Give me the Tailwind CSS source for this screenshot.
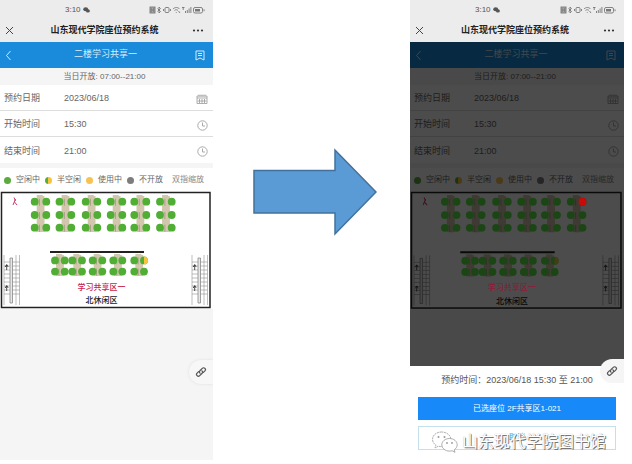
<!DOCTYPE html>
<html lang="zh-CN">
<head>
  <meta charset="UTF-8">
  <meta name="viewport" content="width=device-width, initial-scale=1.0">
  <title>座位预约系统</title>
  <script src="https://cdn.jsdelivr.net/npm/@tailwindcss/browser@4"></script>
</head>
<body class="bg-white font-['Liberation_Sans','Noto_Sans_CJK_SC',sans-serif]">
  <main class="grid min-h-screen grid-cols-[213fr_197fr_214fr] pr-2 pb-1">
    <section class="phone relative flex flex-col overflow-hidden bg-[#f5f5f5]">
      <button class="absolute right-0 bottom-[76px] z-20 flex h-6 w-6 items-center justify-center rounded-l-full bg-[#f7f7f7] shadow-[0_0_3px_#ddd]" aria-label="链接">
        <svg class="h-3 w-3" viewBox="0 0 12 12" fill="none" stroke="#555" stroke-width="1.2" stroke-linecap="round"><path d="M5 7.2a1.9 1.9 0 0 1 .1-2.7l2.2-2.2a1.8 1.8 0 0 1 2.6 2.6L8.4 6.4M7 4.800a1.9 1.9 0 0 1-.1 2.7L4.7 9.7a1.8 1.8 0 0 1-2.6-2.6l1.5-1.5"/></svg>
      </button>
    </section>

    <div class="flex items-start justify-center pt-[148px] pl-1">
      <svg class="h-[88px] w-[126px]" viewBox="0 0 126 88"><path d="M3 22.500H84V2L125 44L84 86V65H3Z" fill="#5b9bd5" stroke="#41719c" stroke-width="1.500"/></svg>
    </div>

    <section class="phone relative flex flex-col overflow-hidden bg-[#f5f5f5]" data-selected>
      <div class="absolute inset-x-0 top-[42px] bottom-0 z-10 bg-black/70"></div>
      <div class="absolute inset-x-0 bottom-0 z-20 flex flex-col gap-[6px] bg-white px-2 pt-2 pb-[10px]">
        <p class="flex h-[14px] items-center justify-center text-[9px] whitespace-pre text-[#555]">预约时间：2023/06/18 15:30 至 21:00</p>
        <button class="mt-[3px] h-[23px] bg-[#1789f8] text-[8px] text-white">已选座位 2F共享区1-021</button>
        <button class="h-6 border border-[#c5e0ea] bg-white text-[8px] text-[#2f9fd8]">取消</button>
      </div>
      <div class="absolute right-[18px] bottom-[6px] z-20 flex items-center gap-[3px]">
        <svg class="h-6 w-7" viewBox="0 0 28 24" fill="#fff" stroke="#999" stroke-width=".8">
          <path stroke-dasharray="2 .7" d="M10.500 2C5.500 2 1.500 5.200 1.500 9.300c0 2.400 1.300 4.400 3.400 5.800L4 18l3.300-1.800c1.100.3 2.100.4 3.200.4 5 0 9.300-3.100 9.300-7.300S15.500 2 10.500 2Z"/>
          <path d="M18.500 8.500c-4.300 0-7.700 2.800-7.700 6.300s3.400 6.300 7.700 6.300c.9 0 1.800-.1 2.600-.4l2.900 1.600-.8-2.500c1.800-1.200 3-3 3-5 0-3.500-3.400-6.300-7.700-6.300Z"/>
          <g fill="#999" stroke="none"><circle cx="7.500" cy="7" r="1"/><circle cx="13.500" cy="7" r="1"/><circle cx="16" cy="13" r=".9"/><circle cx="21" cy="13" r=".9"/></g>
        </svg>
        <span class="text-[16px] leading-6 whitespace-nowrap text-white [text-shadow:1px_1px_0_#777,0_0_1px_#aaa]">山东现代学院图书馆</span>
      </div>
      <button class="absolute right-0 bottom-[77px] z-20 flex h-6 w-6 items-center justify-center rounded-l-full bg-[#f5f5f5]" aria-label="链接">
        <svg class="h-3 w-3" viewBox="0 0 12 12" fill="none" stroke="#555" stroke-width="1.2" stroke-linecap="round"><path d="M5 7.2a1.9 1.9 0 0 1 .1-2.7l2.2-2.2a1.8 1.8 0 0 1 2.6 2.6L8.4 6.4M7 4.800a1.9 1.9 0 0 1-.1 2.7L4.7 9.7a1.8 1.8 0 0 1-2.6-2.6l1.5-1.5"/></svg>
      </button>
    </section>
  </main>

  <template id="screen">
    <div class="flex h-[19px] items-center bg-[#ececec] text-[#555]">
      <div class="flex flex-1 items-center gap-[2px] pl-[65px] text-[8px]">
        <span>3:10</span>
        <svg class="h-[6px] w-[7px]" viewBox="0 0 7 6" fill="#555"><ellipse cx="2.700" cy="2.300" rx="2.500" ry="2"/><ellipse cx="4.900" cy="3.900" rx="2" ry="1.700"/></svg>
      </div>
      <svg class="mr-2 h-[8px] w-[56px]" viewBox="0 0 56 8" fill="none" stroke="#777" stroke-width=".9">
        <rect x="1" y="1" width="5" height="6" fill="#aaa"/><path d="M2.200 6V2.500l2.500 3V2"/>
        <path d="M8.500 2.500l3 3L10 7V1l1.500 1.500-3 3"/>
        <rect x="16" y="1.500" width="4" height="5" rx="1"/><path d="M14.500 3v2M21.500 3v2"/>
        <path d="M24 3c2-2 5-2 6.500 0M25.500 4.500c1-1 2.600-1 3.500 0M27.300 6v.8M29.500 5l1.500 2"/>
        <path d="M33 1.500h2.500M34.200 1v3"/>
        <path d="M36.500 7v-2M38.300 7V4M40.100 7V2.500M41.900 7V1"/>
        <rect x="44.500" y="1.500" width="9" height="5.500" rx="1.500"/><rect x="46" y="3" width="5" height="2.500" fill="#777" stroke="none"/><path d="M55 3.300v2"/>
      </svg>
    </div>
    <header class="flex h-[23px] items-center justify-between bg-[#ececec] pr-[9px] pl-[5px]">
      <button class="h-[9px] w-[9px]" aria-label="关闭">
        <svg class="h-full w-full" viewBox="0 0 9 9" stroke="#444"><path d="M1 1l7 7M8 1L1 8"/></svg>
      </button>
      <h1 class="pl-[3px] text-[9px] font-semibold whitespace-nowrap text-[#222]">山东现代学院座位预约系统</h1>
      <button class="h-[9px] w-3" aria-label="更多">
        <svg class="h-full w-full" viewBox="0 0 12 9" fill="#333"><circle cx="2" cy="4.500" r="1.100"/><circle cx="6" cy="4.500" r="1.100"/><circle cx="10" cy="4.500" r="1.100"/></svg>
      </button>
    </header>
    <nav class="flex h-[26px] items-center justify-between bg-[#1a8adb] pr-2 pl-1">
      <button class="h-[11px] w-[9px]" aria-label="返回">
        <svg class="h-full w-full" viewBox="0 0 9 11" fill="none" stroke="#d5eafa"><path d="M6.500 1L2.500 5.500l4 4.500"/></svg>
      </button>
      <h2 class="pl-[3px] text-[9px] text-[#d9ecfa]">二楼学习共享一</h2>
      <button class="h-[11px] w-[10px]" aria-label="我的预约">
        <svg class="h-full w-full" viewBox="0 0 10 11" fill="none" stroke="#d5eafa"><path d="M1 1h8v9L5 8l-4 2ZM3 3.500h4M3 5.500h4"/></svg>
      </button>
    </nav>
    <p class="flex h-[17px] items-center justify-center pr-1 text-[8px] whitespace-nowrap text-[#666]">当日开放: 07:00--21:00</p>
    <div class="bg-white text-[9px] text-[#666]">
      <label class="flex h-[26px] items-center border-b border-[#ddd] pt-[3px] pr-[5px] pl-1">
        <span class="w-[60px] shrink-0">预约日期</span>
        <input class="w-0 min-w-0 flex-1" value="2023/06/18">
        <svg class="h-[10px] w-3" viewBox="0 0 12 10" fill="none" stroke="#999" stroke-width=".8"><path d="M1 2h10v7.500H1ZM1 4h10M3 .5v2M5 .5v2M7 .5v2M9 .5v2M3.500 5v4M6 5v4M8.500 5v4M1.500 7h9"/></svg>
      </label>
      <label class="flex h-[26px] items-center border-b border-[#ddd] pt-[3px] pr-[5px] pl-1">
        <span class="w-[60px] shrink-0">开始时间</span>
        <input class="w-0 min-w-0 flex-1" value="15:30">
        <svg class="h-[11px] w-[11px]" viewBox="0 0 11 11" fill="none" stroke="#aaa"><circle cx="5.500" cy="5.500" r="4.700"/><path d="M5.500 2.500v3.500h2.500"/></svg>
      </label>
      <label class="flex h-[26px] items-center pt-[3px] pr-[5px] pl-1">
        <span class="w-[60px] shrink-0">结束时间</span>
        <input class="w-0 min-w-0 flex-1" value="21:00">
        <svg class="h-[11px] w-[11px]" viewBox="0 0 11 11" fill="none" stroke="#aaa"><circle cx="5.500" cy="5.500" r="4.700"/><path d="M5.500 2.500v3.500h2.500"/></svg>
      </label>
    </div>
    <div class="mt-[5px] flex h-[22px] items-center gap-[5px] bg-white pt-[2px] pl-1 text-[8px] whitespace-nowrap text-[#666]">
      <i class="h-[7px] w-[7px] rounded-full bg-[#5aaa3c]"></i><span>空闲中</span>
      <i class="h-[7px] w-[7px] rounded-full bg-linear-to-r from-[#5aaa3c] from-50% to-[#f5c542] to-50%"></i><span>半空闲</span>
      <i class="h-[7px] w-[7px] rounded-full bg-[#f8c250]"></i><span>使用中</span>
      <i class="h-[7px] w-[7px] rounded-full bg-[#7d7d7d]"></i><span>不开放</span>
      <span class="pl-1 text-[#888]">双指缩放</span>
    </div>
    <div class="relative bg-white">
      <svg class="map block w-full" viewBox="0 190 213 119">
        <rect x="1.500" y="192.500" width="208.500" height="115" fill="#fff" stroke="#222" stroke-width="1.500"/>
        <path d="M14 197.500l1.500 3.500M15.500 199l-2.500 6M14.500 202l2.500 3" fill="none" stroke="#c2406a"/>
        <g class="tables" fill="#d2c6ad"></g>
        <g class="seats" fill="#4fae33"></g>
        <path d="M144 256.500a3.900 3.900 0 0 1 0 7.800Z" fill="#f5c542"/>
        <path d="M50 252h94" stroke="#222" stroke-width="2"/>
        <g class="stairs" fill="none" stroke="#888" stroke-width=".8">
          <path d="M4 255v50M19.500 255v50M4 262h15.500M4 266h15.500M4 270h15.500M4 274h15.500M4 278h15.500M4 282h15.500M4 286h15.500M4 290h15.500M4 294h15.500M16 255v50" stroke-opacity=".7"/>
          <path d="M10 258h2.500v45H10Z" fill="#e8e8e8"/>
          <path d="M6.700 270v-5M5.200 267l1.500-2.500 1.500 2.500M6.700 291v-5M5.200 288l1.500-2.500 1.500 2.500" stroke="#222"/>
        </g>
        <text class="zone" x="101.500" y="290" text-anchor="middle" font-size="8" font-weight="500" fill="#c8244f">学习共享区一</text>
        <text x="101.500" y="303" text-anchor="middle" font-size="8" font-weight="500" fill="#222">北休闲区</text>
      </svg>
    </div>
  </template>

  <script>
    const ns = 'http://www.w3.org/2000/svg';
    const upper = [[34.7, 46.3], [59.5, 71.3], [85.7, 97.3], [110.7, 122.3], [134.3, 146.3], [160, 171.7]];
    const lower = [[55, 64.7], [72.3, 82], [92.7, 102.3], [113.3, 122.3], [134.3, 144]];

    function add(parent, tag, attrs) {
      const el = document.createElementNS(ns, tag);
      for (const key in attrs) el.setAttribute(key, attrs[key]);
      parent.appendChild(el);
      return el;
    }

    function drawGroup(map, cols, rows, top, height) {
      const tables = map.querySelector('.tables');
      const seats = map.querySelector('.seats');
      cols.forEach(([a, b]) => {
        const mid = (a + b) / 2;
        add(tables, 'rect', { x: mid - 3.8, y: top, width: 6, height });
        add(tables, 'rect', { x: mid - 0.5, y: top + 1, width: 4.5, height: height - 1 });
        rows.forEach((y) => {
          add(tables, 'path', { d: `M${mid - 1} ${y - 3}v7`, stroke: '#a39884', 'stroke-width': 0.8 });
          add(seats, 'circle', { cx: a, cy: y, r: 3.9 });
          add(seats, 'circle', { cx: b, cy: y, r: 3.9 });
        });
      });
    }

    document.querySelectorAll('.phone').forEach((phone) => {
      phone.prepend(document.getElementById('screen').content.cloneNode(true));
      const map = phone.querySelector('.map');
      drawGroup(map, upper, [201.7, 215, 227.7], 195, 37);
      drawGroup(map, lower, [260.4, 271.6], 254, 22);
      const stairs = map.querySelector('.stairs').cloneNode(true);
      stairs.setAttribute('transform', 'translate(188 0)');
      map.appendChild(stairs);

      // the picked seat and the zone name stay lit above the dimmed page
      if ('selected' in phone.dataset) {
        map.querySelector('.seats').setAttribute('fill', '#5ee848');
        const top = add(map.parentNode, 'svg', { viewBox: '0 190 213 119', class: 'absolute inset-0 z-20 h-full w-full' });
        add(top, 'circle', { cx: 171.7, cy: 201.7, r: 3.9, fill: '#c80a0a' });
        const zone = map.querySelector('.zone');
        zone.setAttribute('fill', '#8c1c3a');
        top.appendChild(zone);
      }
    });
  </script>
</body>
</html>
